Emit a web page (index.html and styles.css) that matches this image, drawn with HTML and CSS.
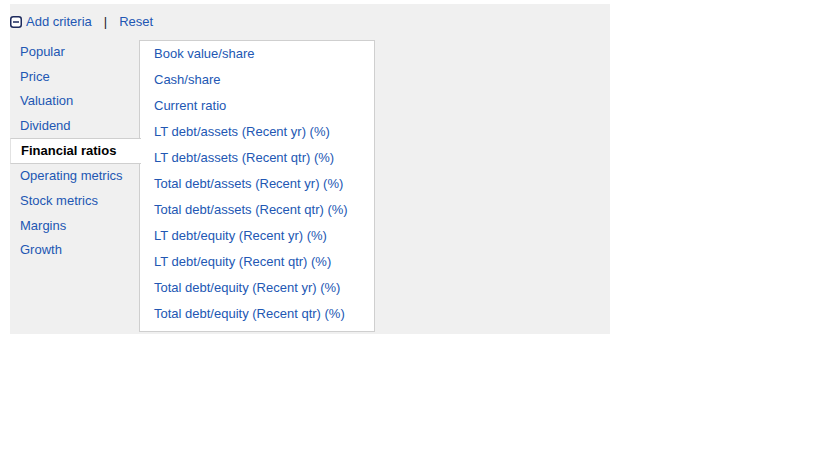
FILE: index.html
```html
<!DOCTYPE html>
<html>
<head>
<meta charset="utf-8">
<link rel="stylesheet" href="styles.css">
</head>
<body>
<div class="panel">
  <div class="header">
    <a class="link toggle" href="#"><svg class="icon" width="12" height="12" viewBox="0 0 12 12"><rect x="0.75" y="0.75" width="10.5" height="10.5" rx="2.5" ry="2.5" fill="#fff" stroke="#1d2a5c" stroke-width="1.5"/><rect x="3" y="5.25" width="6" height="1.5" fill="#1d2a5c"/></svg>Add criteria</a>
    <span class="sep">|</span>
    <a class="link" href="#">Reset</a>
  </div>
  <div class="body">
    <ul class="menu">
      <li class="item">Popular</li>
      <li class="item">Price</li>
      <li class="item">Valuation</li>
      <li class="item">Dividend</li>
      <li class="item selected">Financial ratios</li>
      <li class="item">Operating metrics</li>
      <li class="item">Stock metrics</li>
      <li class="item">Margins</li>
      <li class="item">Growth</li>
    </ul>
    <ul class="options">
      <li class="option">Book value/share</li>
      <li class="option">Cash/share</li>
      <li class="option">Current ratio</li>
      <li class="option">LT debt/assets (Recent yr) (%)</li>
      <li class="option">LT debt/assets (Recent qtr) (%)</li>
      <li class="option">Total debt/assets (Recent yr) (%)</li>
      <li class="option">Total debt/assets (Recent qtr) (%)</li>
      <li class="option">LT debt/equity (Recent yr) (%)</li>
      <li class="option">LT debt/equity (Recent qtr) (%)</li>
      <li class="option">Total debt/equity (Recent yr) (%)</li>
      <li class="option">Total debt/equity (Recent qtr) (%)</li>
    </ul>
  </div>
</div>
</body>
</html>
```
FILE: styles.css
```css
html, body {
  margin: 0;
  padding: 0;
  background: #fff;
}
body {
  padding: 4px 10px;
  font-family: "Liberation Sans", Arial, sans-serif;
  font-size: 13px;
  color: #2257b3;
}
.panel {
  width: 600px;
  height: 330px;
  background: #f0f0f0;
  box-sizing: border-box;
}
.header {
  height: 35px;
  display: flex;
  align-items: center;
  box-sizing: border-box;
}
.link {
  color: #2257b3;
  text-decoration: none;
  display: inline-flex;
  align-items: center;
}
.icon {
  margin-right: 4px;
  display: block;
}
.sep {
  color: #222;
  margin: 0 12px 0 12px;
}
.body {
  display: flex;
  align-items: flex-start;
}
.menu {
  list-style: none;
  margin: 0;
  padding: 1px 0 0;
  width: 130px;
  flex: none;
}
.item {
  height: 24.6px;
  line-height: 24.6px;
  padding-left: 10px;
  white-space: nowrap;
  cursor: pointer;
}
.item.selected {
  position: relative;
  z-index: 1;
  background: #fff;
  color: #000;
  font-weight: bold;
  border-top: 1px solid #cfcfcf;
  border-bottom: 1px solid #cfcfcf;
  border-left: 1px solid #e2e2e2;
  height: 24px;
  line-height: 24px;
  padding-left: 10px;
  margin-right: -1px;
}
.options {
  list-style: none;
  margin: 1px 0 0 -1px;
  padding: 0 0 4px;
  width: 234px;
  background: #fff;
  border: 1px solid #cfcfcf;
}
.option {
  height: 26px;
  line-height: 26px;
  padding-left: 14px;
  white-space: nowrap;
}
```
